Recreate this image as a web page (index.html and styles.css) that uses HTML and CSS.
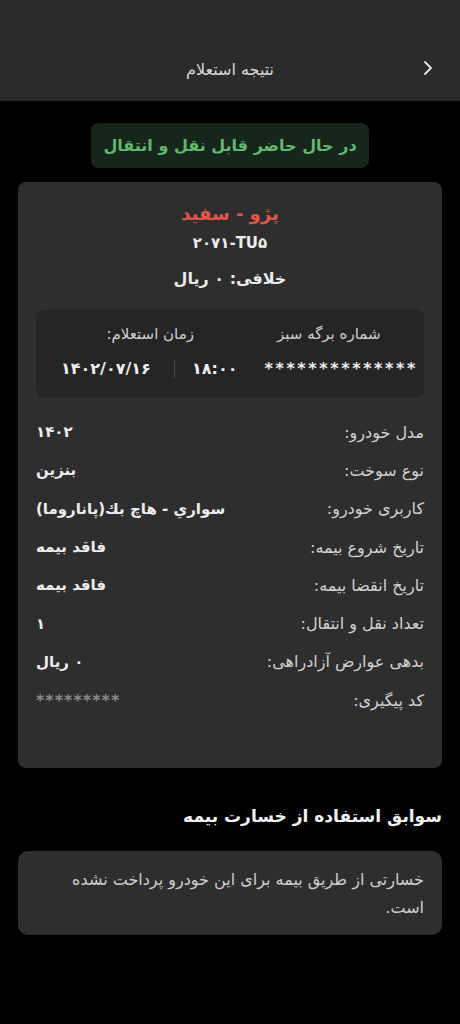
FILE: index.html
```html
<!DOCTYPE html>
<html lang="fa" dir="rtl">
<head>
  <meta charset="UTF-8">
  <meta name="viewport" content="width=device-width, initial-scale=1.0">
  <title>نتیجه استعلام</title>
  <link rel="stylesheet" href="styles.css">
</head>
<body>
  <!-- Header -->
  <header class="topbar">
    <span class="back">
      <svg width="12" height="16" viewBox="0 0 12 16"><path d="M3 2 L9 8 L3 14" fill="none" stroke="#e6e6e6" stroke-width="1.8" stroke-linecap="round" stroke-linejoin="round"/></svg>
    </span>
    <h1>نتیجه استعلام</h1>
  </header>

  <main class="content">
    <div class="status-wrap">
      <div class="status">در حال حاضر قابل نقل و انتقال</div>
    </div>

    <section class="card">
      <h2 class="car-name">پژو - سفید</h2>
      <p class="plate"><bdi dir="ltr">۲۰۷۱-TU۵</bdi></p>
      <p class="fine">خلافی: ۰ ریال</p>

      <div class="inner">
        <div class="inner-labels">
          <span>شماره برگه سبز</span>
          <span>زمان استعلام:</span>
        </div>
        <div class="inner-values">
          <span class="stars">**************</span>
          <span class="time">۱۸:۰۰</span>
          <span class="sep"></span>
          <span class="date">۱۴۰۲/۰۷/۱۶</span>
        </div>
      </div>

      <ul class="rows">
        <li><span class="label">مدل خودرو:</span><span class="value">۱۴۰۲</span></li>
        <li><span class="label">نوع سوخت:</span><span class="value">بنزین</span></li>
        <li><span class="label">کاربری خودرو:</span><span class="value">سواري - هاچ بك(پاناروما)</span></li>
        <li><span class="label">تاریخ شروع بیمه:</span><span class="value">فاقد بیمه</span></li>
        <li><span class="label">تاریخ انقضا بیمه:</span><span class="value">فاقد بیمه</span></li>
        <li><span class="label">تعداد نقل و انتقال:</span><span class="value">۱</span></li>
        <li><span class="label">بدهی عوارض آزادراهی:</span><span class="value">۰ ریال</span></li>
        <li><span class="label">کد پیگیری:</span><span class="value muted">*********</span></li>
      </ul>
    </section>

    <h3 class="section-title">سوابق استفاده از خسارت بیمه</h3>
    <div class="note">خسارتی از طریق بیمه برای این خودرو پرداخت نشده است.</div>
  </main>
</body>
</html>
```

FILE: styles.css
```css
* {
  margin: 0;
  padding: 0;
  box-sizing: border-box;
}

body {
  font-family: "DejaVu Sans", "Noto Sans", sans-serif;
  background: #000;
  color: #e8e8e8;
  width: 460px;
  min-height: 1024px;
}

.topbar {
  height: 101px;
  background: #2b2b2b;
  position: relative;
  display: flex;
  align-items: flex-end;
  justify-content: center;
  padding-bottom: 19px;
}

.topbar h1 {
  font-size: 16px;
  line-height: 24px;
  font-weight: normal;
  color: #dadada;
}

.back {
  position: absolute;
  right: 26px;
  bottom: 25px;
  display: flex;
}

.content {
  padding: 22px 18px 0;
}

.status-wrap {
  display: flex;
  justify-content: center;
}

.status {
  background: #16261a;
  color: #63b86e;
  font-weight: bold;
  font-size: 16px;
  line-height: 21px;
  padding: 12px 12px;
  border-radius: 8px;
}

.card {
  margin-top: 14px;
  background: #2e2e2e;
  border-radius: 8px;
  padding: 18px 18px 49px;
  text-align: center;
}

.car-name {
  color: #e0574b;
  font-size: 18px;
  line-height: 28px;
  font-weight: bold;
}

.plate {
  margin-top: 3px;
  font-size: 15px;
  line-height: 24px;
  font-weight: bold;
  color: #ececec;
}

.fine {
  margin-top: 12px;
  font-size: 16px;
  line-height: 24px;
  font-weight: bold;
  color: #ececec;
}

.inner {
  margin-top: 19px;
  background: #252525;
  border-radius: 8px;
  padding: 12px 6px 16px 25px;
}

.inner-labels {
  display: flex;
  font-size: 15px;
  line-height: 24px;
  color: #cfcfcf;
}

.inner-labels span {
  flex: 1;
}

.inner-values {
  margin-top: 11px;
  display: flex;
  align-items: center;
  font-size: 16px;
  line-height: 24px;
  font-weight: bold;
  color: #f0f0f0;
}

.stars {
  letter-spacing: 2.6px;
  margin-left: 27px;
}

.time {
  margin-left: 17px;
}

.sep {
  width: 1px;
  height: 18px;
  background: #4a4a4a;
  margin-left: 18px;
}

.date {
  margin-right: auto;
}

.rows {
  list-style: none;
  margin-top: 16px;
}

.rows li {
  display: flex;
  justify-content: space-between;
  align-items: center;
  height: 38.3px;
  font-size: 16px;
}

.label {
  color: #d2d2d2;
}

.value {
  font-weight: bold;
  font-size: 15px;
  color: #eeeeee;
}

.value.muted {
  color: #8a8a8a;
  font-size: 16px;
  letter-spacing: 1px;
}

.section-title {
  margin-top: 35px;
  font-size: 17px;
  line-height: 26px;
  font-weight: bold;
  color: #f2f2f2;
}

.note {
  margin-top: 22px;
  background: #2e2e2e;
  border-radius: 10px;
  padding: 15px 18px 13px 40px;
  font-size: 16px;
  line-height: 28px;
  color: #cfcfcf;
}
```
